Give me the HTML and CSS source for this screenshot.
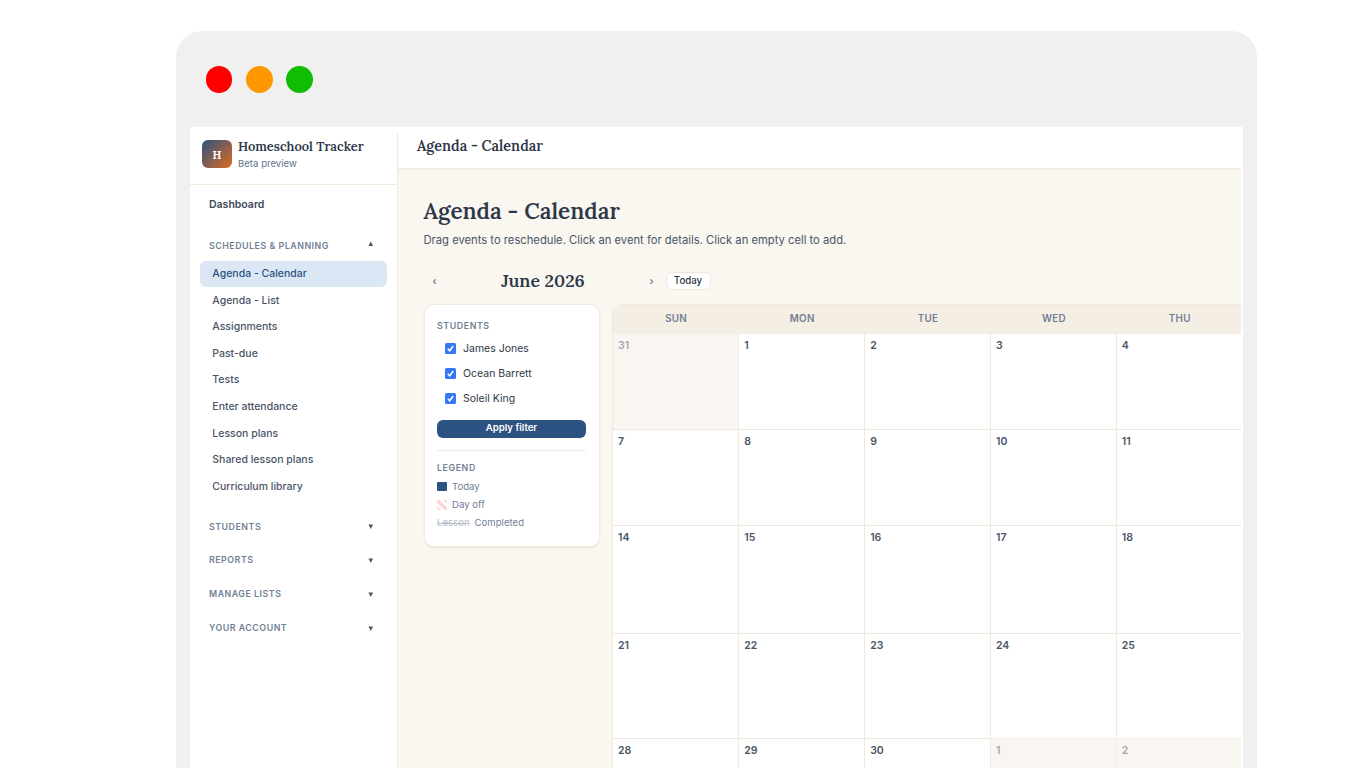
FILE: index.html
```html
<!DOCTYPE html>
<html lang="en">
<head>
    <meta charset="UTF-8">
    <meta name="viewport" content="width=device-width, initial-scale=1.0">
    <title>Agenda - Calendar | Homeschool Tracker</title>
    <link rel="stylesheet" href="styles.css">
</head>
<body>
    <div class="browser">
        <div class="browser-bar">
            <span class="dot red"></span>
            <span class="dot orange"></span>
            <span class="dot green"></span>
        </div>
        <div class="screen">
            <aside class="sidebar">
                <div class="brand">
                    <div class="logo">H</div>
                    <div>
                        <div class="brand-name">Homeschool Tracker</div>
                        <div class="brand-sub">Beta preview</div>
                    </div>
                </div>
                <nav class="nav">
                    <a class="nav-top">Dashboard</a>
                    <div class="nav-group open"><span>Schedules &amp; Planning</span><svg class="arrow" viewBox="0 0 6 6"><path d="M3 0.5L5.5 5.5H0.5z"/></svg></div>
                    <a class="nav-item active">Agenda - Calendar</a>
                    <a class="nav-item">Agenda - List</a>
                    <a class="nav-item">Assignments</a>
                    <a class="nav-item">Past-due</a>
                    <a class="nav-item">Tests</a>
                    <a class="nav-item">Enter attendance</a>
                    <a class="nav-item">Lesson plans</a>
                    <a class="nav-item">Shared lesson plans</a>
                    <a class="nav-item">Curriculum library</a>
                    <div class="nav-closed">
                        <div class="nav-group"><span>Students</span><svg class="arrow" viewBox="0 0 6 6"><path d="M0.5 0.5H5.5L3 5.5z"/></svg></div>
                        <div class="nav-group"><span>Reports</span><svg class="arrow" viewBox="0 0 6 6"><path d="M0.5 0.5H5.5L3 5.5z"/></svg></div>
                        <div class="nav-group"><span>Manage lists</span><svg class="arrow" viewBox="0 0 6 6"><path d="M0.5 0.5H5.5L3 5.5z"/></svg></div>
                        <div class="nav-group"><span>Your account</span><svg class="arrow" viewBox="0 0 6 6"><path d="M0.5 0.5H5.5L3 5.5z"/></svg></div>
                    </div>
                </nav>
            </aside>
            <main class="main">
                <header class="topbar">Agenda - Calendar</header>
                <div class="content">
                    <h1>Agenda - Calendar</h1>
                    <p class="intro">Drag events to reschedule. Click an event for details. Click an empty cell to add.</p>
                    <div class="month-bar">
                        <span class="step">‹</span>
                        <h2>June 2026</h2>
                        <span class="step">›</span>
                        <button class="today">Today</button>
                    </div>
                    <div class="columns">
                        <section class="filter">
                            <h3>Students</h3>
                            <div class="students">
                                <label class="student"><svg class="check" viewBox="0 0 11 11"><rect width="11" height="11" rx="1.5" fill="#3478f6"/><path d="M2.8 5.8L4.7 7.8L8.2 3" fill="none" stroke="#fff" stroke-width="1.5"/></svg>James Jones</label>
                                <label class="student"><svg class="check" viewBox="0 0 11 11"><rect width="11" height="11" rx="1.5" fill="#3478f6"/><path d="M2.8 5.8L4.7 7.8L8.2 3" fill="none" stroke="#fff" stroke-width="1.5"/></svg>Ocean Barrett</label>
                                <label class="student"><svg class="check" viewBox="0 0 11 11"><rect width="11" height="11" rx="1.5" fill="#3478f6"/><path d="M2.8 5.8L4.7 7.8L8.2 3" fill="none" stroke="#fff" stroke-width="1.5"/></svg>Soleil King</label>
                            </div>
                            <button class="apply">Apply filter</button>
                            <div class="legend">
                                <h3>Legend</h3>
                                <div class="legend-row"><span class="swatch now"></span>Today</div>
                                <div class="legend-row"><svg class="swatch off" viewBox="0 0 10 10"><path d="M0 0H2.5L10 7.5V10H7.5L0 2.5zM6 0H10V4zM0 6L4 10H0z" fill="#fed7d7"/></svg>Day off</div>
                                <div class="legend-row"><s>Lesson</s>Completed</div>
                            </div>
                        </section>
                        <section class="calendar">
                            <div class="weekday">Sun</div><div class="weekday">Mon</div><div class="weekday">Tue</div><div class="weekday">Wed</div><div class="weekday">Thu</div>
                            <div class="day other">31</div><div class="day">1</div><div class="day">2</div><div class="day">3</div><div class="day">4</div>
                            <div class="day">7</div><div class="day">8</div><div class="day">9</div><div class="day">10</div><div class="day">11</div>
                            <div class="day">14</div><div class="day">15</div><div class="day">16</div><div class="day">17</div><div class="day">18</div>
                            <div class="day">21</div><div class="day">22</div><div class="day">23</div><div class="day">24</div><div class="day">25</div>
                            <div class="day">28</div><div class="day">29</div><div class="day">30</div><div class="day other">1</div><div class="day other">2</div>
                        </section>
                    </div>
                </div>
            </main>
        </div>
    </div>
</body>
</html>
```
FILE: styles.css
```css
* {
    box-sizing: border-box;
}
body {
    margin: 0;
    height: 768px;
    overflow: hidden;
    background: #fff;
    font-family: Inter, sans-serif;
    font-size: 10.5px;
    color: #2d3748;
}
h1, h2, h3, p {
    margin: 0;
}
button {
    font-family: inherit;
    padding: 0;
}
.browser {
    width: 1081px;
    height: 760px;
    margin: 31px 0 0 176px;
    padding: 0 14px;
    background: #f0f0f0;
    border-radius: 26px 26px 0 0;
}
.browser-bar {
    display: flex;
    gap: 13.5px;
    height: 96px;
    padding: 35px 0 0 15.5px;
}
.dot {
    width: 26.8px;
    height: 26.8px;
    border-radius: 50%;
}
.red {
    background: #f00;
}
.orange {
    background: #ff9800;
}
.green {
    background: #10bd00;
}
.screen {
    display: flex;
    height: 664px;
    padding-right: 2px;
    background: #fff;
    border-radius: 2px 0 0 0;
}

/* sidebar */
.sidebar {
    width: 208px;
    margin-top: 6px;
    border-right: 1px solid #f0ebdf;
}
.brand {
    display: flex;
    gap: 6px;
    height: 52px;
    padding: 7px 0 0 12px;
    border-bottom: 1px solid #f1ebdd;
}
.logo {
    width: 30px;
    height: 28px;
    border-radius: 6px;
    background: linear-gradient(135deg, #2c5282, #dd6b20);
    color: #fff;
    font: bold 11px/30px Lora, "Liberation Serif", serif;
    text-align: center;
}
.brand-name {
    font: 600 12.8px/14px Lora, "Liberation Serif", serif;
    white-space: nowrap;
}
.brand-sub {
    margin-top: 3px;
    font-size: 9.6px;
    line-height: 13px;
    color: #64748b;
}
.nav {
    padding: 0 10px;
}
.nav-top {
    display: block;
    padding: 12px 0 0 9px;
    line-height: 16px;
    font-weight: 600;
    color: #3d495c;
}
.nav-group {
    display: flex;
    justify-content: space-between;
    align-items: center;
    height: 33.8px;
    padding: 0 13.5px 0 9px;
    font-size: 8.8px;
    font-weight: 600;
    letter-spacing: 0.53px;
    text-transform: uppercase;
    color: #718096;
}
.nav-group.open {
    height: 32px;
    margin-top: 16px;
}
.arrow {
    width: 5.5px;
    height: 5.5px;
    margin-top: 2px;
    fill: #4a5568;
}
.nav-group.open .arrow {
    margin: 0 0 3px;
}
.nav-item {
    display: block;
    height: 25.6px;
    margin-bottom: 1px;
    padding-left: 12.3px;
    border-radius: 6px;
    line-height: 25px;
    font-weight: 500;
    color: #4a5568;
}
.nav-item.active {
    background: #dbe7f5;
    color: #2c5282;
}
.nav-closed {
    margin-top: 9.8px;
}

/* main area */
.main {
    width: 843px;
    overflow: hidden;
    background: #faf7f0;
}
.topbar {
    height: 43px;
    padding-left: 19px;
    background: #fff;
    border-bottom: 2px solid #f1ede4;
    font: 600 14.4px/39px Lora, "Liberation Serif", serif;
}
.content {
    padding: 25px 0 0 25.5px;
}
h1 {
    font: 600 22.45px/32px Lora, "Liberation Serif", serif;
}
.intro {
    margin-top: 5px;
    font-size: 11.22px;
    line-height: 17px;
    color: #4a5568;
}
.month-bar {
    display: flex;
    align-items: center;
    height: 20px;
    margin-top: 22px;
}
.month-bar h2 {
    width: 195px;
    font: 600 17.7px/20px Lora, "Liberation Serif", serif;
    text-align: center;
}
.step {
    width: 22px;
    text-align: center;
    color: #4a5568;
}
.today {
    width: 45px;
    height: 18px;
    margin-left: 3px;
    border: 1px solid #eee6da;
    border-radius: 6px;
    background: #fff;
    font-size: 9.7px;
    line-height: 16px;
    font-weight: 500;
    color: #2d3748;
}
.columns {
    display: flex;
    align-items: flex-start;
    gap: 12px;
    margin-top: 13px;
}

/* filter card */
.filter {
    flex: none;
    width: 176.5px;
    height: 243px;
    padding: 14px 13px 0 12.5px;
    border: 1px solid #f0ebdf;
    border-radius: 10px;
    background: #fff;
    box-shadow: 0 1px 2px rgba(90, 70, 30, 0.1);
}
h3 {
    font-size: 8.8px;
    line-height: 14px;
    font-weight: 600;
    letter-spacing: 0.6px;
    text-transform: uppercase;
    color: #718096;
}
.students {
    padding: 3px 0 0 8px;
}
.student {
    display: flex;
    align-items: center;
    gap: 7px;
    height: 25.2px;
}
.check {
    width: 11px;
    height: 11px;
}
.apply {
    display: block;
    width: 149px;
    height: 18px;
    margin-top: 8.4px;
    border: 0;
    border-radius: 6px;
    background: #2c5282;
    color: #fff;
    font-size: 9.6px;
    line-height: 14px;
    padding-bottom: 2px;
    font-weight: 600;
}
.legend {
    margin-top: 12px;
    padding-top: 10px;
    border-top: 1px solid #f1ebdd;
}
.legend h3 {
    margin-bottom: 3px;
}
.legend-row {
    display: flex;
    align-items: center;
    gap: 5px;
    height: 17.8px;
    font-size: 9.6px;
    color: #718096;
}
.swatch {
    width: 10px;
    height: 9px;
    border-radius: 1px;
}
.now {
    background: #2c5282;
}
.off {
    height: 10px;
}
.legend-row s {
    color: #b3bcc9;
}

/* calendar */
.calendar {
    display: grid;
    grid-template-columns: 126.3px repeat(4, 125.85px);
    grid-template-rows: 28px 96px 96px 108px 105px 100px;
    flex: none;
    border: 1px solid #f0e9dc;
    border-radius: 10px 0 0 0;
    overflow: hidden;
    background: #fff;
}
.weekday {
    background: #f5eee5;
    font-size: 9.8px;
    line-height: 27px;
    font-weight: 600;
    letter-spacing: 0.3px;
    text-align: center;
    text-transform: uppercase;
    color: #718096;
}
.day {
    padding: 5px 0 0 5px;
    border-top: 1px solid #f1e9dc;
    border-right: 1px solid #f1e9dc;
    line-height: 14px;
    font-weight: 600;
    color: #4a5568;
}
.day.other {
    border-color: #f5eee5;
    background: #f9f5f0;
    color: #a3a9b2;
}
```
